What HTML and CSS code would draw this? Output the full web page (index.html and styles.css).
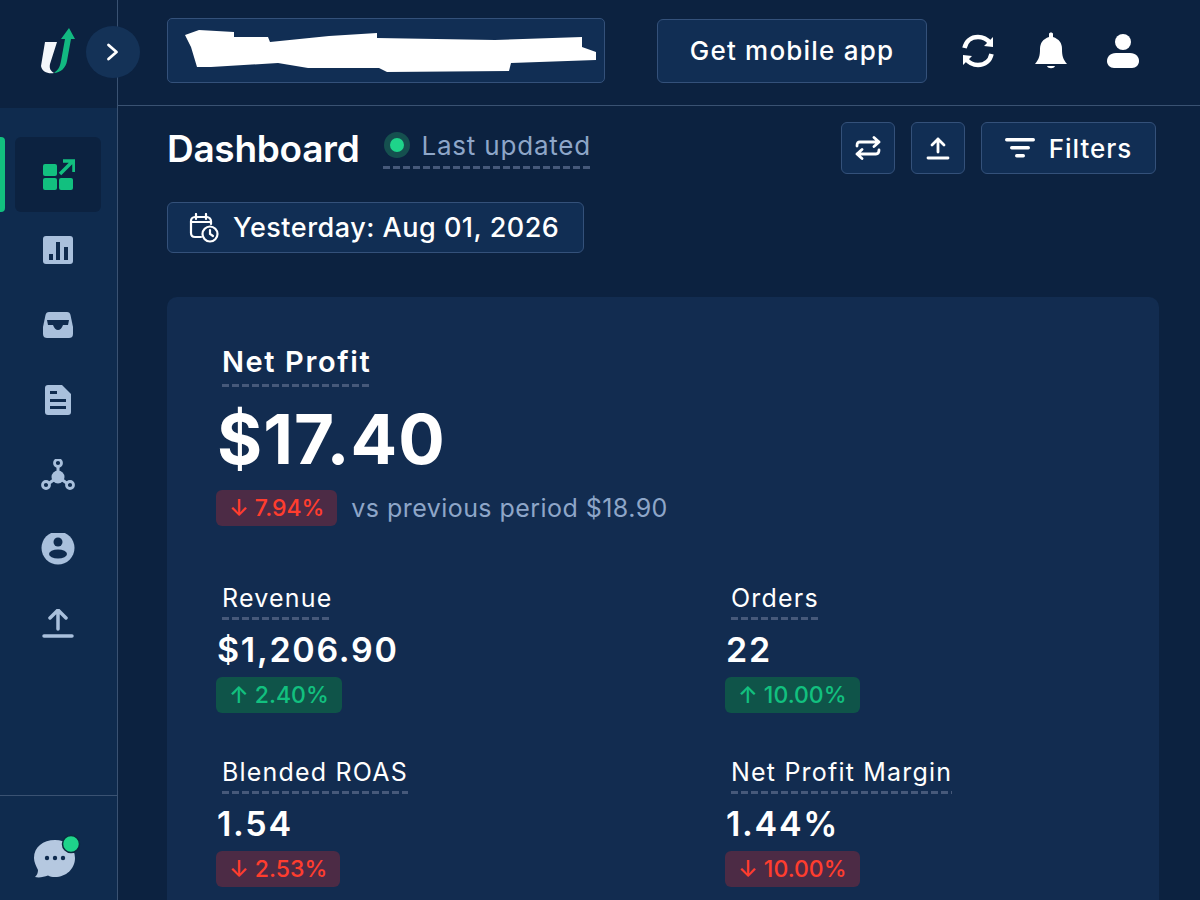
FILE: index.html
```html
<!DOCTYPE html>
<html lang="en">
<head>
    <meta charset="UTF-8">
    <title>Dashboard</title>
    <link rel="stylesheet" href="styles.css">
</head>
<body>
<div class="app">
    <aside class="sidebar">
        <div class="brand">
            <svg class="logo" width="36" height="46" viewBox="0 0 36 46">
                <path d="M5 14 L17 14 L10 36 C9 41 11 43 14 45 C8 46 2 44 1 38 Z" fill="#f4f7fb"/>
                <path d="M29 0 L35 11 L31 11 L27 33 C26 40 20 45 14 45 C18 42 20 39 21 33 L25 11 L21 11 Z" fill="#12b981"/>
            </svg>
            <button class="expand">
                <svg width="16" height="18" viewBox="0 0 16 18"><path d="M3.500 2 L11.500 9 L3.500 16" fill="none" stroke="#fff" stroke-width="2.800" stroke-linecap="round" stroke-linejoin="round"/></svg>
            </button>
        </div>
        <nav class="nav">
            <div class="navItem active">
                <svg width="34" height="32" viewBox="0 0 34 32" fill="#12c07f">
                    <rect x="2" y="5" width="14" height="12" rx="2"/>
                    <rect x="2" y="19" width="14" height="12" rx="2"/>
                    <rect x="18" y="19" width="14" height="12" rx="2"/>
                    <path d="M19 15 L31 3 M22 2 L33 2 L33 13" fill="none" stroke="#12c07f" stroke-width="3.500"/>
                </svg>
            </div>
            <div class="navItem">
                <svg width="30" height="28" viewBox="0 0 30 28"><rect x="0" y="0" width="30" height="28" rx="3" fill="#a9c0dc"/><rect x="6" y="18" width="4" height="6" fill="#0f2b4e"/><rect x="13" y="6" width="4" height="18" fill="#0f2b4e"/><rect x="21" y="11" width="4" height="13" fill="#0f2b4e"/></svg>
            </div>
            <div class="navItem">
                <svg width="30" height="28" viewBox="0 0 30 28"><path d="M6 1 H24 C26 1 27 2 27.500 4 L30 16 V23 C30 26 28 27 26 27 H4 C2 27 0 26 0 23 V16 L2.500 4 C3 2 4 1 6 1 Z" fill="#a9c0dc"/><path d="M4 9 H26 L25 14 H20 C19 17 17 19 15 19 C13 19 11 17 10 14 H5 Z" fill="#0f2b4e"/></svg>
            </div>
            <div class="navItem">
                <svg width="26" height="30" viewBox="0 0 26 30"><path d="M3 0 H17 L26 9 V27 C26 29 25 30 23 30 H3 C1 30 0 29 0 27 V3 C0 1 1 0 3 0 Z" fill="#a9c0dc"/><rect x="5" y="6" width="7" height="3" fill="#0f2b4e"/><rect x="5" y="14" width="16" height="3" fill="#0f2b4e"/><rect x="5" y="21" width="16" height="3" fill="#0f2b4e"/></svg>
            </div>
            <div class="navItem">
                <svg width="34" height="32" viewBox="0 0 34 32" fill="none" stroke="#a9c0dc"><circle cx="17" cy="18" r="6.500" fill="#a9c0dc" stroke="none"/><path d="M17 6 V14 M7 25 L14 20 M27 25 L20 20" stroke-width="3"/><circle cx="17" cy="4" r="3.500" stroke-width="2.800"/><circle cx="5" cy="26" r="3.500" stroke-width="2.800"/><circle cx="29" cy="26" r="3.500" stroke-width="2.800"/></svg>
            </div>
            <div class="navItem">
                <svg width="34" height="34" viewBox="0 0 34 34"><circle cx="17" cy="15" r="16.500" fill="#a9c0dc"/><circle cx="17" cy="9" r="4.500" fill="#0f2b4e"/><ellipse cx="17" cy="21" rx="9" ry="4.500" fill="#0f2b4e"/></svg>
            </div>
            <div class="navItem">
                <svg width="34" height="32" viewBox="0 0 34 32" fill="none" stroke="#a9c0dc" stroke-width="3.500" stroke-linecap="round" stroke-linejoin="round"><path d="M17 20 V2 M9 9 L17 1 L25 9"/><path d="M3 27 H31"/></svg>
            </div>
        </nav>
        <div class="chatBox">
            <svg width="48" height="46" viewBox="0 0 48 46">
                <path d="M22 7 C33 7 42 14 42 25 C42 36 33 44 22 44 C19 44 17 43.500 15 42.500 C11 44 6 45 2 44 C4 42 5 40 5 37 C3 33 1 29 1 25 C1 14 10 7 22 7 Z" fill="#b5c8e0"/>
                <circle cx="14" cy="25" r="2.200" fill="#0f2b4e"/><circle cx="22" cy="25" r="2.200" fill="#0f2b4e"/><circle cx="30" cy="25" r="2.200" fill="#0f2b4e"/>
                <circle cx="38" cy="11" r="8.500" fill="#1ed48a" stroke="#0b2a3e" stroke-width="1.500"/>
            </svg>
        </div>
    </aside>

    <main class="main">
        <header class="topBar">
            <div class="storeBox">
                <svg width="411" height="42" viewBox="0 0 411 42"><path d="M0 5 L14 0 L49 2 L49 7 L83 7 L85 12 L144 6 L192 3 L192 8 L310 10 L397 7 L397 17 L411 22 L411 30 L326 33 L324 41 L202 42 L194 38 L123 38 L93 33 L26 37 L12 37 L6 17 Z" fill="#fff"/></svg>
            </div>
            <button class="btn mobileBtn">Get mobile app</button>
            <div class="topIcons">
                <svg width="36" height="36" viewBox="0 0 36 36" fill="none" stroke="#fff" stroke-width="4.500"><path d="M4.500 15 C6 8 11 4 18 4 C23 4 27 6 30 10"/><path d="M31.500 21 C30 28 25 32 18 32 C13 32 9 30 6 26"/><path d="M33 4 L33 14 L24 13 Z M3 32 L3 22 L12 23 Z" fill="#fff" stroke="none"/></svg>
                <svg width="34" height="38" viewBox="0 0 34 38" fill="#fff"><path d="M15 2 C15 0 19 0 19 2 V5 C25 7 28 11 28 17 C28 24 29 27 33 32 H1 C5 27 6 24 6 17 C6 11 9 7 15 5 Z"/><path d="M13 34 H21 C20 37 14 37 13 34 Z"/></svg>
                <svg width="34" height="36" viewBox="0 0 34 36" fill="#fff"><circle cx="17" cy="9" r="8"/><path d="M10 20 H24 C30 20 33 24 33 28 C33 32 30 35 26 35 H8 C4 35 1 32 1 28 C1 24 4 20 10 20 Z"/></svg>
            </div>
        </header>

        <section class="content">
            <div class="titleRow">
                <h1>Dashboard</h1>
                <div class="updated tip"><span class="liveDot"></span>Last updated</div>
                <div class="actions">
                    <button class="btn iconBtn">
                        <svg width="26" height="24" viewBox="0 0 26 24" fill="none" stroke="#fff" stroke-width="2.800" stroke-linecap="round" stroke-linejoin="round"><path d="M2 10 C2 7 3 6 5 6 H24 M19 1.500 L24 6 L19 10.500"/><path d="M24 14 C24 17 23 18 21 18 H2 M7 13.500 L2 18 L7 22.500"/></svg>
                    </button>
                    <button class="btn iconBtn">
                        <svg width="24" height="24" viewBox="0 0 24 24" fill="none" stroke="#fff" stroke-width="2.800" stroke-linecap="round" stroke-linejoin="round"><path d="M12 16 V3 M6 9 L12 3 L18 9"/><path d="M2 22 H22"/></svg>
                    </button>
                    <button class="btn filterBtn">
                        <svg width="30" height="22" viewBox="0 0 30 22" fill="#fff"><rect x="0" y="1" width="30" height="3.500" rx="1.700"/><rect x="5" y="9" width="20" height="3.500" rx="1.700"/><rect x="10" y="17" width="10" height="3.500" rx="1.700"/></svg>
                        Filters
                    </button>
                </div>
            </div>

            <button class="btn dateBtn">
                <svg width="30" height="30" viewBox="0 0 30 30" fill="none" stroke="#fff" stroke-width="2.200" stroke-linecap="round"><path d="M12 24 H6 C3.500 24 2 22.500 2 20 V8 C2 6 3.500 4 6 4 H18 C20 4 22 6 22 8 V11"/><path d="M2 9 H22 M7 1 V6 M17 1 V6"/><circle cx="21" cy="21" r="7.500"/><path d="M21 17 V21 L24 23"/></svg>
                Yesterday: Aug 01, 2026
            </button>

            <div class="card">
                <div class="hero">
                    <div class="heroLabel tip">Net Profit</div>
                    <div class="heroValue">$17.40</div>
                    <div class="heroCompare">
                        <span class="badge down">↓ 7.94%</span>
                        <span class="prev">vs previous period $18.90</span>
                    </div>
                </div>
                <div class="metrics">
                    <div class="metric">
                        <div class="metricLabel tip">Revenue</div>
                        <div class="metricValue">$1,206.90</div>
                        <span class="badge up">↑ 2.40%</span>
                    </div>
                    <div class="metric">
                        <div class="metricLabel tip">Orders</div>
                        <div class="metricValue">22</div>
                        <span class="badge up">↑ 10.00%</span>
                    </div>
                    <div class="metric">
                        <div class="metricLabel tip">Blended ROAS</div>
                        <div class="metricValue">1.54</div>
                        <span class="badge down">↓ 2.53%</span>
                    </div>
                    <div class="metric">
                        <div class="metricLabel tip">Net Profit Margin</div>
                        <div class="metricValue">1.44%</div>
                        <span class="badge down">↓ 10.00%</span>
                    </div>
                </div>
            </div>
        </section>
    </main>
</div>
</body>
</html>
```

FILE: styles.css
```css
* {
    box-sizing: border-box;
}

html, body {
    margin: 0;
    height: 900px;
    overflow: hidden;
}

body {
    background-color: #0c2240;
    color: #fff;
    font-family: Inter, "Liberation Sans", sans-serif;
}

button {
    font-family: inherit;
    color: #fff;
    cursor: pointer;
}

svg {
    display: block;
}

.app {
    display: grid;
    grid-template-columns: 118px 1fr;
    grid-template-rows: 900px;
    height: 900px;
}

.main {
    overflow: hidden;
}

/* sidebar */
.sidebar {
    position: relative;
    display: flex;
    flex-direction: column;
    border-right: 1px solid #3a5272;
    background-color: #0f2b4e;
}

.brand {
    height: 108px;
    display: flex;
    align-items: center;
    padding-left: 40px;
    background-color: #0c2240;
}

.logo {
    margin-top: -7px;
}

.expand {
    position: absolute;
    left: 86px;
    top: 26px;
    width: 54px;
    height: 52px;
    border: none;
    border-radius: 50%;
    background-color: #143257;
    display: flex;
    align-items: center;
    justify-content: center;
    z-index: 2;
}

.nav {
    padding-top: 29px;
    flex: 1;
}

.navItem {
    position: relative;
    height: 75px;
    margin-left: 15px;
    width: 86px;
    display: flex;
    align-items: center;
    justify-content: center;
}

.navItem.active {
    background-color: #0c2240;
    border-radius: 6px;
}

.navItem.active::before {
    content: "";
    position: absolute;
    left: -15px;
    top: 0;
    bottom: 0;
    width: 5px;
    border-radius: 0 4px 4px 0;
    background-color: #12c07f;
}

.chatBox {
    height: 105px;
    border-top: 1px solid #3a5272;
    padding: 37px 0 0 33px;
}

/* top bar */
.topBar {
    height: 106px;
    display: flex;
    align-items: center;
    padding: 0 0 4px 49px;
    border-bottom: 1px solid #3a5272;
}

.storeBox {
    width: 438px;
    height: 65px;
    display: flex;
    align-items: center;
    padding-left: 17px;
    background-color: #112e54;
    border: 1px solid #34517a;
    border-radius: 5px;
}

.btn {
    background-color: #112e54;
    border: 1px solid #34517a;
    border-radius: 6px;
}

.mobileBtn {
    width: 270px;
    height: 64px;
    margin-left: 52px;
    font-size: 26px;
    font-weight: 500;
    letter-spacing: 1.2px;
}

.topIcons {
    display: flex;
    align-items: center;
    gap: 38px;
    margin-left: 33px;
}

/* page content */
.content {
    padding: 16px 41px 0 49px;
}

.titleRow {
    display: flex;
    align-items: center;
    height: 52px;
}

h1 {
    margin: 0;
    font-size: 37px;
    font-weight: 600;
    letter-spacing: -0.3px;
}

.tip {
    background: repeating-linear-gradient(90deg, #46597a 0 7px, transparent 7px 10px) left bottom / 100% 3px no-repeat;
}

.updated {
    display: flex;
    align-items: center;
    margin-left: 24px;
    margin-top: 2px;
    padding-bottom: 8px;
    font-size: 26px;
    letter-spacing: 0.8px;
    color: #8ea6c8;
}

.liveDot {
    width: 14px;
    height: 14px;
    margin: 0 17px 0 7px;
    border-radius: 50%;
    background-color: #1ed48a;
    box-shadow: 0 0 0 6px #15504f;
}

.actions {
    display: flex;
    gap: 16px;
    margin-left: auto;
    margin-right: 3px;
}

.iconBtn {
    width: 54px;
    height: 52px;
    display: flex;
    align-items: center;
    justify-content: center;
}

.filterBtn {
    width: 175px;
    height: 52px;
    display: flex;
    align-items: center;
    justify-content: center;
    gap: 14px;
    font-size: 26px;
    font-weight: 500;
    letter-spacing: 1px;
}

.dateBtn {
    display: flex;
    align-items: center;
    gap: 14px;
    width: 417px;
    height: 51px;
    margin-top: 28px;
    padding-left: 21px;
    font-size: 27px;
    font-weight: 500;
    letter-spacing: 0.5px;
}

/* card */
.card {
    height: 640px;
    margin: 44px 0 0;
    padding: 47px 0 0 49px;
    border-radius: 10px;
    background-color: #122c50;
}

.heroLabel {
    width: max-content;
    margin-left: 6px;
    padding-bottom: 8px;
    font-size: 29px;
    font-weight: 600;
    letter-spacing: 1.6px;
}

.heroValue {
    margin: 11px 0 0 1px;
    font-size: 69px;
    line-height: 82px;
    font-weight: 700;
    letter-spacing: 1px;
}

.heroCompare {
    display: flex;
    align-items: center;
    gap: 14px;
    margin-top: 10px;
}

.prev {
    font-size: 25px;
    letter-spacing: 0.45px;
    color: #8ea6c8;
}

.badge {
    display: inline-block;
    height: 36px;
    padding: 0 13px;
    border-radius: 6px;
    font-size: 23px;
    font-weight: 500;
    line-height: 36px;
}

.badge.down {
    color: #ff3d2e;
    background-color: #4c2b45;
}

.badge.up {
    color: #12c07f;
    background-color: #0f5449;
}

.metrics {
    display: grid;
    grid-template-columns: 509px 1fr;
    grid-auto-rows: 174px;
    margin-top: 56px;
}

.metric {
    align-self: start;
}

.metricLabel {
    width: max-content;
    margin-left: 6px;
    padding-bottom: 6px;
    font-size: 25px;
    line-height: 32px;
    letter-spacing: 1.2px;
}

.metricValue {
    margin: 10px 0 7px 1px;
    font-size: 34px;
    line-height: 40px;
    font-weight: 600;
    letter-spacing: 1.7px;
}
```
